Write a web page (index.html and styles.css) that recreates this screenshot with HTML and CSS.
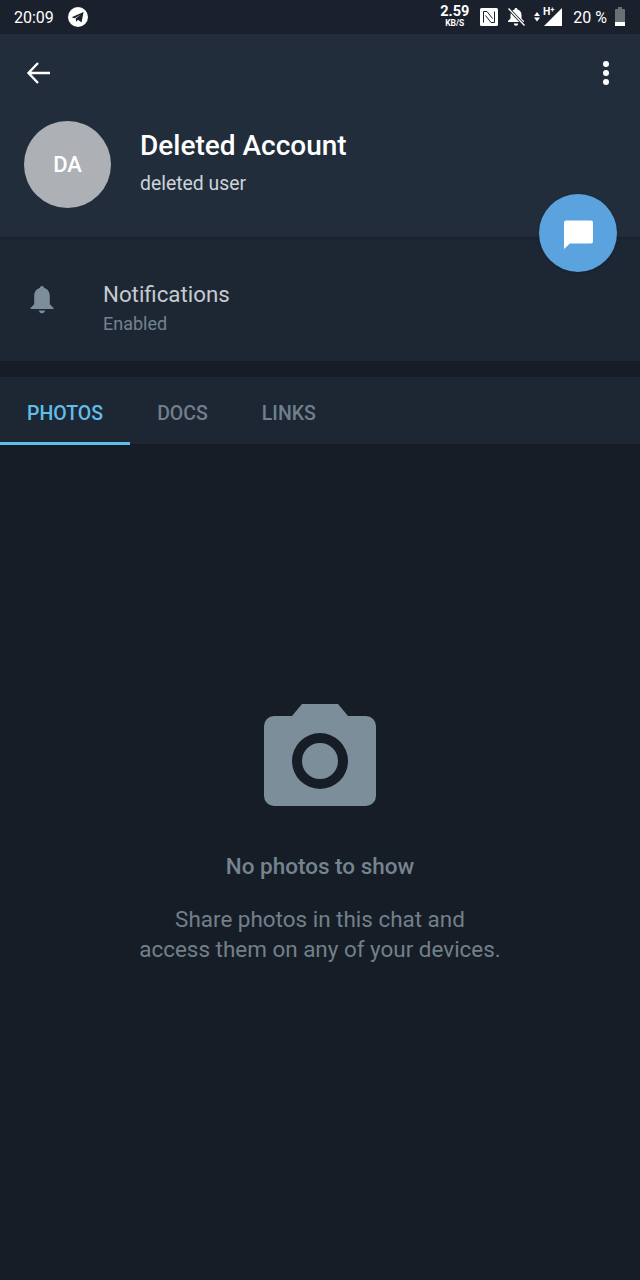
FILE: index.html
```html
<!DOCTYPE html>
<html lang="en">

<head>
    <meta charset="UTF-8">
    <meta name="viewport" content="width=device-width, initial-scale=1.0">
    <title>Deleted Account</title>
    <link rel="stylesheet" href="styles.css">
</head>

<body>
    <div class="app">
        <div class="status">
            <div class="status-left">
                <span class="clock">20:09</span>
                <svg class="tg" width="20" height="20" viewBox="0 0 20 20">
                    <circle cx="10" cy="10" r="10" fill="#fff" />
                    <path d="M3.600 10.300 15.600 5 13.500 15.400 10 12.800 8.200 14.800 7.700 11.600 12.800 7.400 6.600 11.200Z" fill="#1a212c" />
                </svg>
            </div>
            <div class="status-right">
                <div class="speed"><b>2.59</b><small>KB/S</small></div>
                <svg class="nfc" width="18" height="18" viewBox="0 0 18 18">
                    <rect width="18" height="18" rx="1.500" fill="#fff" />
                    <path d="M3.500 14.500V3.500H7L12.500 10.500M14.500 3.500V14.500H11L5.500 7.500" fill="none" stroke="#1a212c" stroke-width="1" />
                </svg>
                <svg class="mute" width="20" height="20" viewBox="0 0 20 20">
                    <path d="M10 1c.9 0 1.500.6 1.500 1.500 2.600.6 4 2.800 4 5.500v3.500l2.500 2.500v1H2v-1l2.500-2.500V8c0-2.700 1.400-4.900 4-5.500C8.500 1.600 9.100 1 10 1ZM7.800 16.500h4.400a2.200 2.200 0 0 1-4.400 0Z" fill="#fff" />
                    <path d="M2.500 1.500 18.500 18.500" stroke="#1a212c" stroke-width="3" />
                    <path d="M2.500 1.500 18.500 18.500" stroke="#fff" stroke-width="1.300" />
                </svg>
                <svg class="signal" width="32" height="26" viewBox="0 -3 32 26">
                    <path d="M4 9 7 5 10 9ZM4 10.500 7 14.500 10 10.500Z" fill="#fff" />
                    <path d="M32 1V19H14Z" fill="#fff" />
                    <text x="13" y="7.500" class="signal-h">H</text>
                    <text x="20.500" y="5" class="signal-plus">+</text>
                </svg>
                <span class="percent">20 %</span>
                <div class="battery"><div class="battery-level"></div></div>
            </div>
        </div>

        <div class="header">
            <div class="toolbar">
                <svg width="26" height="24" viewBox="0 0 26 24">
                    <path d="M2.500 12H24M12 2 2.500 12 12 22" fill="none" stroke="#fff" stroke-width="2.400" />
                </svg>
                <div class="dots"><i></i><i></i><i></i></div>
            </div>
            <div class="profile">
                <div class="avatar">DA</div>
                <div class="who">
                    <div class="name">Deleted Account</div>
                    <div class="sub">deleted user</div>
                </div>
            </div>
        </div>

        <div class="fab">
            <svg width="29" height="29" viewBox="0 0 29 29">
                <path d="M2 0.500h25a2 2 0 0 1 2 2v19a2 2 0 0 1-2 2H6L0 29V2.500a2 2 0 0 1 2-2Z" fill="#fff" />
            </svg>
        </div>

        <div class="notify">
            <svg class="bell" width="24" height="28" viewBox="0 0 24 28">
                <path d="M12 0c1.300 0 2.200 1 2.200 2.100 3.900 1 5.600 4.300 5.600 8.300v7.800L23.500 22v1H.5v-1l3.700-3.800v-7.800c0-4 1.700-7.300 5.600-8.300C9.800 1 10.700 0 12 0ZM9 24.500h6c0 1.500-1.300 2.800-3 2.800s-3-1.300-3-2.800Z" fill="#7d8e9b" />
            </svg>
            <div class="notify-info">
                <div class="notify-title">Notifications</div>
                <div class="notify-sub">Enabled</div>
            </div>
        </div>

        <div class="tabs">
            <div class="tab active">PHOTOS</div>
            <div class="tab">DOCS</div>
            <div class="tab">LINKS</div>
        </div>

        <div class="empty">
            <svg width="112" height="102" viewBox="0 0 112 102">
                <path fill-rule="evenodd" d="M38 0H74L84 12H102a10 10 0 0 1 10 10V92a10 10 0 0 1-10 10H10A10 10 0 0 1 0 92V22A10 10 0 0 1 10 12H28ZM56 29a28 28 0 1 0 0 56 28 28 0 1 0 0-56Z" fill="#7d8e9b" />
                <circle cx="56" cy="57" r="18" fill="#7d8e9b" />
            </svg>
            <div class="empty-title">No photos to show</div>
            <div class="empty-text">Share photos in this chat and<br>access them on any of your devices.</div>
        </div>
    </div>
</body>

</html>
```

FILE: styles.css
```css
* {
    margin: 0;
    padding: 0;
    box-sizing: border-box;
    font-family: Roboto, sans-serif;
}

body {
    background-color: #161d27;
}

.app {
    width: 640px;
    height: 1280px;
    position: relative;
    overflow: hidden;
    display: flex;
    flex-direction: column;
    background-color: #161d27;
}

.status {
    height: 34px;
    background-color: #1a212c;
    display: flex;
    align-items: center;
    justify-content: space-between;
    padding: 0 15px 0 14px;
    color: #fff;
}

.status-left,
.status-right {
    display: flex;
    align-items: center;
}

.clock {
    font-size: 16px;
    margin-right: 14px;
}

.speed {
    display: flex;
    flex-direction: column;
    align-items: center;
    line-height: 1;
    margin-right: 11px;
}

.speed b {
    font-size: 14.500px;
    font-weight: 700;
    line-height: 12px;
}

.speed small {
    font-size: 8.500px;
    font-weight: 700;
    line-height: 10px;
}

.nfc {
    margin-right: 8px;
}

.mute {
    margin-right: 4px;
}

.signal {
    margin-right: 11px;
}

.signal-h {
    font-size: 10.500px;
    font-weight: 700;
    fill: #fff;
}

.signal-plus {
    font-size: 7px;
    font-weight: 700;
    fill: #fff;
}

.percent {
    font-size: 16px;
    margin-right: 8px;
}

.battery {
    width: 10px;
    height: 17px;
    background-color: #6b7077;
    border-radius: 1px;
    display: flex;
    align-items: flex-end;
    position: relative;
}

.battery::before {
    content: "";
    position: absolute;
    top: -2px;
    left: 3px;
    width: 4px;
    height: 2px;
    background-color: #6b7077;
}

.battery-level {
    width: 100%;
    height: 4px;
    background-color: #fff;
}

.header {
    height: 203px;
    background-color: #212d3b;
    box-shadow: 0 1px 2px rgba(0, 0, 0, 0.25);
    padding: 0 24px 0 26px;
    position: relative;
}

.toolbar {
    height: 78px;
    display: flex;
    align-items: center;
    justify-content: space-between;
}

.dots {
    display: flex;
    flex-direction: column;
    gap: 3px;
    margin-right: 7px;
}

.dots i {
    display: block;
    width: 6px;
    height: 6px;
    border-radius: 50%;
    background-color: #fff;
}

.profile {
    display: flex;
    align-items: center;
    margin-top: 9px;
    margin-left: -2px;
    gap: 30px;
}

.avatar {
    width: 87px;
    height: 87px;
    border-radius: 50%;
    background-color: #adb0b5;
    color: #fff;
    font-size: 22px;
    font-weight: 500;
    display: flex;
    align-items: center;
    justify-content: center;
}

.who {
    margin-top: -5px;
    margin-left: -1px;
}

.name {
    color: #fff;
    font-size: 28px;
    font-weight: 500;
    line-height: 36px;
}

.sub {
    color: #cdd3d9;
    font-size: 19.400px;
    line-height: 24px;
    margin-top: 8px;
}

.fab {
    position: absolute;
    left: 539px;
    top: 194px;
    width: 78px;
    height: 78px;
    border-radius: 50%;
    background-color: #5ba3de;
    display: flex;
    align-items: center;
    justify-content: center;
    box-shadow: 0 1px 3px rgba(0, 0, 0, 0.2);
}

.fab svg {
    margin-top: 2px;
}

.notify {
    height: 124px;
    background-color: #1d2733;
    display: flex;
    align-items: center;
    padding: 0 0 0 30px;
}

.bell {
    margin-right: 49px;
    margin-top: 2px;
    flex-shrink: 0;
}

.notify-info {
    margin-top: 16px;
}

.notify-title {
    color: #c5cbd1;
    font-size: 22.300px;
    line-height: 30px;
}

.notify-sub {
    color: #74828e;
    font-size: 18px;
    line-height: 24px;
    margin-top: 3px;
}

.tabs {
    height: 68px;
    margin-top: 16px;
    background-color: #1d2733;
    border-bottom: 1px solid #141a22;
    display: flex;
}

.tab {
    color: #6f7f8c;
    font-size: 19.500px;
    font-weight: 500;
    line-height: 74px;
    padding: 0 27px;
    height: 68px;
}

.tab.active {
    color: #62bde9;
    border-bottom: 3px solid #62bde9;
}

.empty {
    flex: 1;
    display: flex;
    flex-direction: column;
    align-items: center;
    padding-top: 259px;
    text-align: center;
}

.empty-title {
    color: #75848e;
    font-size: 22.500px;
    font-weight: 500;
    line-height: 30px;
    margin-top: 45px;
}

.empty-text {
    color: #72808a;
    font-size: 22.450px;
    line-height: 30px;
    margin-top: 23px;
}
```
